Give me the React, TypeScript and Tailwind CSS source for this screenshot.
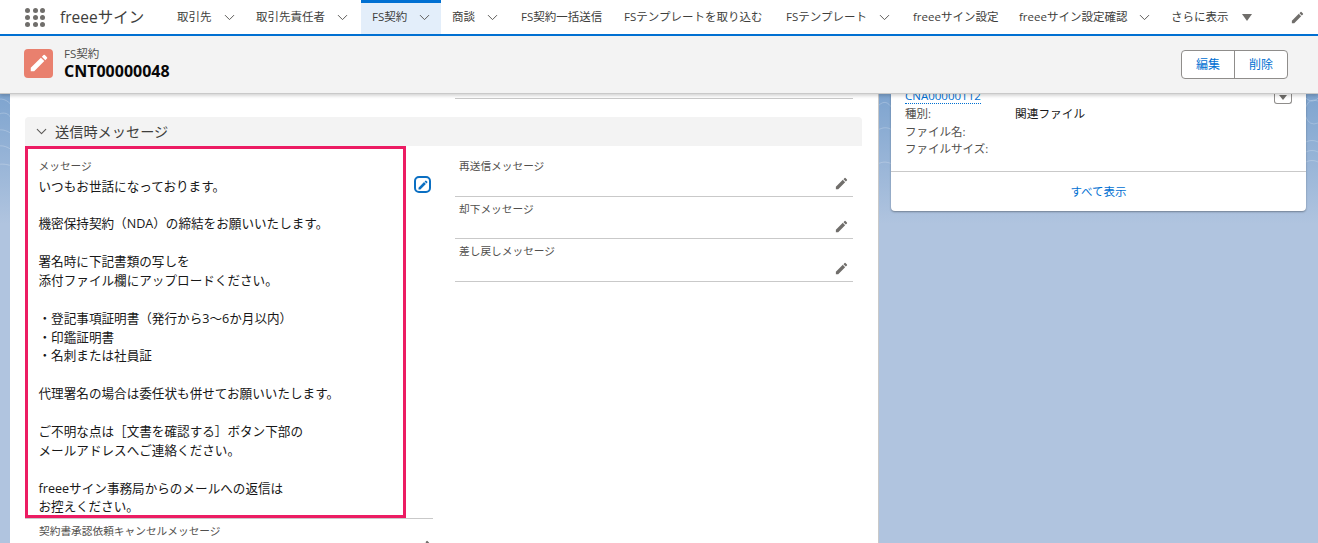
import { ChevronDown } from "lucide-react";
import { MdEdit } from "react-icons/md";

const font = "font-['Open_Sans','Noto_Sans_CJK_JP',sans-serif]";

const tabs = [
  { label: "取引先", width: "w-[79px]", chevron: true },
  { label: "取引先責任者", width: "w-[116px]", chevron: true },
  { label: "FS契約", width: "w-[80px]", chevron: true, active: true },
  { label: "商談", width: "w-[69px]", chevron: true },
  { label: "FS契約一括送信", width: "w-[103px]" },
  { label: "FSテンプレートを取り込む", width: "w-[162px]" },
  { label: "FSテンプレート", width: "w-[127px]", chevron: true },
  { label: "freeeサイン設定", width: "w-[106px]" },
  { label: "freeeサイン設定確認", width: "w-[153px]", chevron: true },
];

const sideFields = ["再送信メッセージ", "却下メッセージ", "差し戻しメッセージ"];

const message = [
  "いつもお世話になっております。",
  "",
  "機密保持契約（NDA）の締結をお願いいたします。",
  "",
  "署名時に下記書類の写しを",
  "添付ファイル欄にアップロードください。",
  "",
  "・登記事項証明書（発行から3〜6か月以内）",
  "・印鑑証明書",
  "・名刺または社員証",
  "",
  "代理署名の場合は委任状も併せてお願いいたします。",
  "",
  "ご不明な点は［文書を確認する］ボタン下部の",
  "メールアドレスへご連絡ください。",
  "",
  "freeeサイン事務局からのメールへの返信は",
  "お控えください。",
];

function NavBar() {
  return (
    <nav className="relative z-20 flex h-[36px] items-stretch border-b-2 border-[#0070d2] bg-white">
      <div className="ml-[25px] grid h-[34px] w-[21px] grid-cols-3 content-center gap-[2px]">
        {Array.from({ length: 9 }).map((_, i) => (
          <span key={i} className="h-[5px] w-[5px] rounded-full bg-[#706e6b]" />
        ))}
      </div>
      <div className="ml-[14px] w-[106px] pt-[6px] text-[15.5px] leading-[22px] text-[#3e3e3c]">freeeサイン</div>
      {tabs.map((tab) => (
        <div
          key={tab.label}
          className={`${tab.width} flex h-[34px] items-center pl-[11px] text-[11.5px] text-[#3e3e3c] ${
            tab.active ? "border-t-[3px] border-[#0070d2] bg-[#e3eefa] pb-[3px]" : ""
          }`}
        >
          <span>{tab.label}</span>
          {tab.chevron && <ChevronDown className="ml-[9px] h-[17px] w-[17px] text-[#5c5a58]" strokeWidth={1.4} />}
        </div>
      ))}
      <div className="flex h-[34px] items-center pl-[10px] text-[11.5px] text-[#3e3e3c]">
        <span>さらに表示</span>
        <span className="ml-[13px] h-0 w-0 border-x-[5px] border-t-[7px] border-x-transparent border-t-[#706e6b]" />
      </div>
      <MdEdit className="ml-[38px] mt-[10px] h-[15px] w-[15px] text-[#706e6b]" />
    </nav>
  );
}

function RecordHeader() {
  return (
    <header className="relative z-10 flex h-[58px] items-center border-b border-[#c9c9c9] bg-[#f3f3f3] pb-[3px] pl-[24px] pr-[30px] shadow-[0_2px_3px_rgba(0,0,0,0.16)]">
      <div className="flex h-[29px] w-[29px] items-center justify-center rounded-[4px] bg-[#e9806e]">
        <MdEdit className="h-[22px] w-[22px] text-white" />
      </div>
      <div className="ml-[11px]">
        <div className="text-[11.5px] leading-[15px] text-[#514f4d]">FS契約</div>
        <div className="text-[16px] font-bold leading-[20px] text-[#080707]">CNT00000048</div>
      </div>
      <div className="ml-auto mt-[3px] flex h-[29px] overflow-hidden rounded-[4px] border border-[#8f8d8b] bg-white text-[12px] text-[#0070d2]">
        <div className="flex w-[53px] items-center justify-center border-r border-[#8f8d8b]">編集</div>
        <div className="flex w-[52px] items-center justify-center">削除</div>
      </div>
    </header>
  );
}

function MessageSection() {
  return (
    <div className="grid grid-cols-[408px_398px] gap-x-[22px]">
      <div className="relative">
        <div className="flex">
          <div className="h-[372px] w-[381px] overflow-hidden border-[3px] border-[#ec1c63] pl-[10.5px] pt-[10px] text-[12.6px] text-[#181818]">
            <div className="mb-[3.5px] text-[10.7px] leading-[15px] text-[#514f4d]">メッセージ</div>
            {message.map((line, i) => (
              <div key={i} className="h-[18.88px] leading-[18.88px]">
                {line}
              </div>
            ))}
          </div>
          <div className="ml-[8px] mt-[30px] flex h-[17px] w-[17px] items-center justify-center rounded-[5px] border-2 border-[#0b6fc2] text-[#0b6fc2]">
            <MdEdit className="h-[12px] w-[12px]" />
          </div>
        </div>
        <div className="relative h-[30px] border-t border-[#c9c9c9] pl-[14px] pt-[4px] text-[10.7px] leading-[16px] text-[#514f4d]">
          契約書承認依頼キャンセルメッセージ
          <MdEdit className="absolute right-[2px] top-[20px] h-[15px] w-[15px] text-[#706e6b]" />
        </div>
      </div>
      <div className="pt-[8px]">
        {sideFields.map((label) => (
          <div key={label} className="relative h-[42.5px] border-b border-[#c9c9c9] pl-[4px] pt-[2px] text-[10.7px] leading-[20px] text-[#514f4d]">
            {label}
            <MdEdit className="absolute right-[4px] top-[22px] h-[15px] w-[15px] text-[#706e6b]" />
          </div>
        ))}
      </div>
    </div>
  );
}

function RelatedCard() {
  return (
    <aside className="relative w-[415px] self-start rounded-b-[4px] bg-white shadow-[0_1px_2px_rgba(0,0,0,0.35)]">
      <div className="relative h-[77px] overflow-hidden pl-[14px] text-[11.5px] leading-[17.5px] text-[#514f4d]">
        <div className="-mt-[7px] h-[17px] w-fit border-b border-dotted border-[#0070d2] leading-[17px] text-[#0070d2]">CNA00000112</div>
        <div className="mt-[1px] flex">
          <span className="w-[110px]">種別:</span>
          <span className="text-[11.7px] text-[#181818]">関連ファイル</span>
        </div>
        <div>ファイル名:</div>
        <div>ファイルサイズ:</div>
        <div className="absolute right-[14px] top-0 flex h-[10px] w-[18px] items-start justify-center rounded-b-[3px] border border-t-0 border-[#8f8d8b] pt-[1px]">
          <span className="h-0 w-0 border-x-[4px] border-t-[5px] border-x-transparent border-t-[#706e6b]" />
        </div>
      </div>
      <div className="flex h-[40px] items-center justify-center border-t border-[#c9c9c9] text-[11.5px] text-[#0070d2]">すべて表示</div>
    </aside>
  );
}

// faint contour lines of the page background, only visible in the side strips
function BackgroundLines() {
  return (
    <svg className="absolute left-0 top-0 h-[130px] w-[1318px]" viewBox="0 0 1318 130" fill="none" stroke="#ffffff" strokeOpacity="0.22" strokeWidth="1">
      <path d="M-6 8c6-6 14-2 18 4M-4 22c8-6 14-2 16 4M-6 38c6-4 12-2 18 2M-6 54c6-4 12-2 18 2M-6 72c6-3 12-2 18 0" />
      <path d="M878 12c6-6 10-4 14 2M878 36c5-3 10-3 14 0M878 70c5-3 10-2 14 0" />
      <ellipse cx="1314" cy="18" rx="9" ry="12" />
      <path d="M1306 48c4-2 8-2 12 0M1306 58c4-2 8-2 12 0M1306 68c4-2 8-2 12 0M1306 4c4 4 8 4 12 0" />
    </svg>
  );
}

export default function App() {
  return (
    <div className={`h-[543px] w-[1318px] overflow-hidden bg-white ${font}`}>
      <NavBar />
      <RecordHeader />
      <main className="relative flex h-[449px] gap-[12px] overflow-hidden bg-[linear-gradient(to_bottom,#7ea4cf_0px,#b0c4df_130px)] pl-[10px]">
        <BackgroundLines />
        <section className="relative w-[869px] border-r border-[#c9c9c9] bg-white pl-[15px] pr-[16px]">
          <div className="ml-[430px] mt-[4px] w-[398px] border-t border-[#c9c9c9]" />
          <div className="mt-[18px] flex h-[29px] items-center rounded-t-[4px] bg-[#f3f3f3] pl-[8px] text-[14.2px] text-[#3e3e3c]">
            <ChevronDown className="mr-[5px] h-[17px] w-[17px] text-[#5c5a58]" strokeWidth={1.5} />
            送信時メッセージ
          </div>
          <MessageSection />
        </section>
        <RelatedCard />
      </main>
    </div>
  );
}
